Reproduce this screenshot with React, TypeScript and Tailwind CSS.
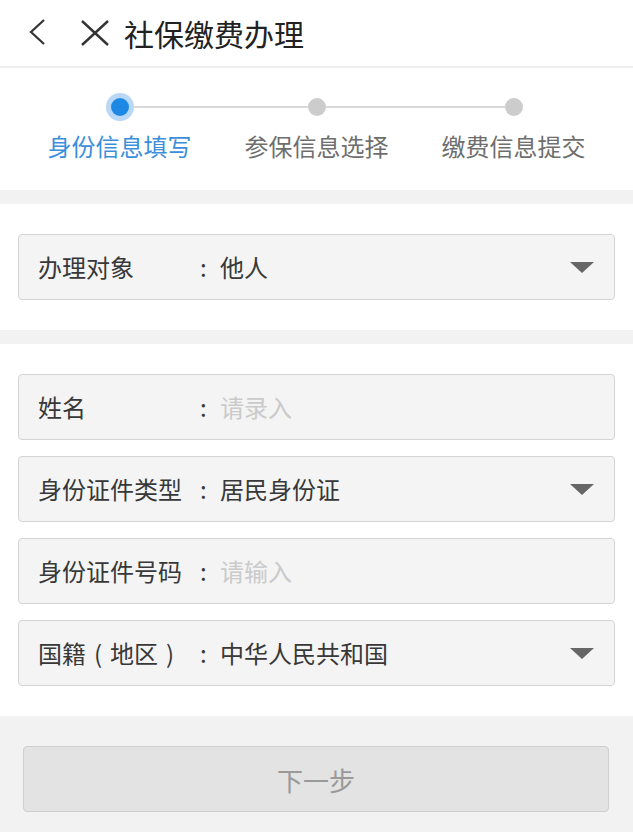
import React from "react";

const font = { fontFamily: '"Noto Sans CJK SC", "Noto Sans", sans-serif' };

function Arrow() {
  return (
    <svg width="24" height="11" viewBox="0 0 24 11" className="shrink-0">
      <polygon points="0,0 24,0 12,11" fill="#666666" />
    </svg>
  );
}

function Field({
  label,
  value,
  placeholder,
  select,
}: {
  label: React.ReactNode;
  value?: string;
  placeholder?: string;
  select?: boolean;
}) {
  return (
    <div className="flex h-[66px] items-center rounded-[4px] border border-[#d4d4d4] bg-[#f4f4f4] pl-[19px] pr-[20px]">
      <span className="flex w-[162px] shrink-0 text-[24px] text-[#383838]">{label}</span>
      <span className="w-[20px] shrink-0 text-[24px] text-[#383838]">:</span>
      {value ? (
        <span className="flex-1 text-[24px] text-[#383838]">{value}</span>
      ) : (
        <span className="flex-1 text-[24px] text-[#cacaca]">{placeholder}</span>
      )}
      {select && <Arrow />}
    </div>
  );
}

function Step({
  label,
  active,
  left,
  right,
}: {
  label: string;
  active?: boolean;
  left?: boolean;
  right?: boolean;
}) {
  return (
    <div className="flex flex-col items-center">
      <div className="flex h-[28px] w-full items-center">
        <div className={`h-[2px] flex-1 ${left ? "bg-[#d9d9d9]" : ""}`} />
        {active ? (
          <div className="flex h-[28px] w-[28px] items-center justify-center rounded-full bg-[#b8d8f5]">
            <div className="h-[18px] w-[18px] rounded-full bg-[#1e88e5]" />
          </div>
        ) : (
          <div className="h-[18px] w-[18px] rounded-full bg-[#cccccc]" />
        )}
        <div className={`h-[2px] flex-1 ${right ? "bg-[#d9d9d9]" : ""}`} />
      </div>
      <div
        className={`mt-[8px] text-[24px] leading-[34px] ${
          active ? "text-[#3b8fda]" : "text-[#6e6e6e]"
        }`}
      >
        {label}
      </div>
    </div>
  );
}

export default function App() {
  return (
    <div className="min-h-[832px] w-full bg-[#f2f2f2]" style={font}>
      {/* Header */}
      <div className="flex h-[68px] items-center border-b-2 border-[#eeeeee] bg-white pl-[28px]">
        <svg width="20" height="28" viewBox="0 0 20 28" className="shrink-0 -mt-[2px]">
          <polyline points="16,2 3,14 16,26" fill="none" stroke="#333333" strokeWidth="2.2" />
        </svg>
        <svg width="30" height="26" viewBox="0 0 30 26" className="ml-[32px] shrink-0">
          <line x1="2" y1="1" x2="28" y2="25" stroke="#333333" strokeWidth="2.4" />
          <line x1="28" y1="1" x2="2" y2="25" stroke="#333333" strokeWidth="2.4" />
        </svg>
        <span className="ml-[14px] text-[30px] leading-none text-[#222222]">社保缴费办理</span>
      </div>

      {/* Steps */}
      <div className="grid h-[122px] grid-cols-3 bg-white px-[21px] pt-[25px]">
        <Step label="身份信息填写" active right />
        <Step label="参保信息选择" left right />
        <Step label="缴费信息提交" left />
      </div>

      {/* Target */}
      <div className="mt-[14px] bg-white px-[18px] pb-[30px] pt-[30px]">
        <Field label="办理对象" value="他人" select />
      </div>

      {/* Personal info */}
      <div className="mt-[14px] flex flex-col gap-[16px] bg-white px-[18px] py-[30px]">
        <Field label="姓名" placeholder="请录入" />
        <Field label="身份证件类型" value="居民身份证" select />
        <Field label="身份证件号码" placeholder="请输入" />
        <Field
          label={
            <>
              <span>国籍</span>
              <span className="w-[24px] text-center">(</span>
              <span>地区</span>
              <span className="w-[24px] text-center">)</span>
            </>
          }
          value="中华人民共和国"
          select
        />
      </div>

      {/* Button */}
      <div className="pl-[23px] pr-[24px] pt-[30px]">
        <div className="flex h-[66px] items-center justify-center rounded-[4px] border border-[#cfcfcf] bg-[#e3e3e3] text-[26px] text-[#999999]">
          下一步
        </div>
      </div>
    </div>
  );
}
